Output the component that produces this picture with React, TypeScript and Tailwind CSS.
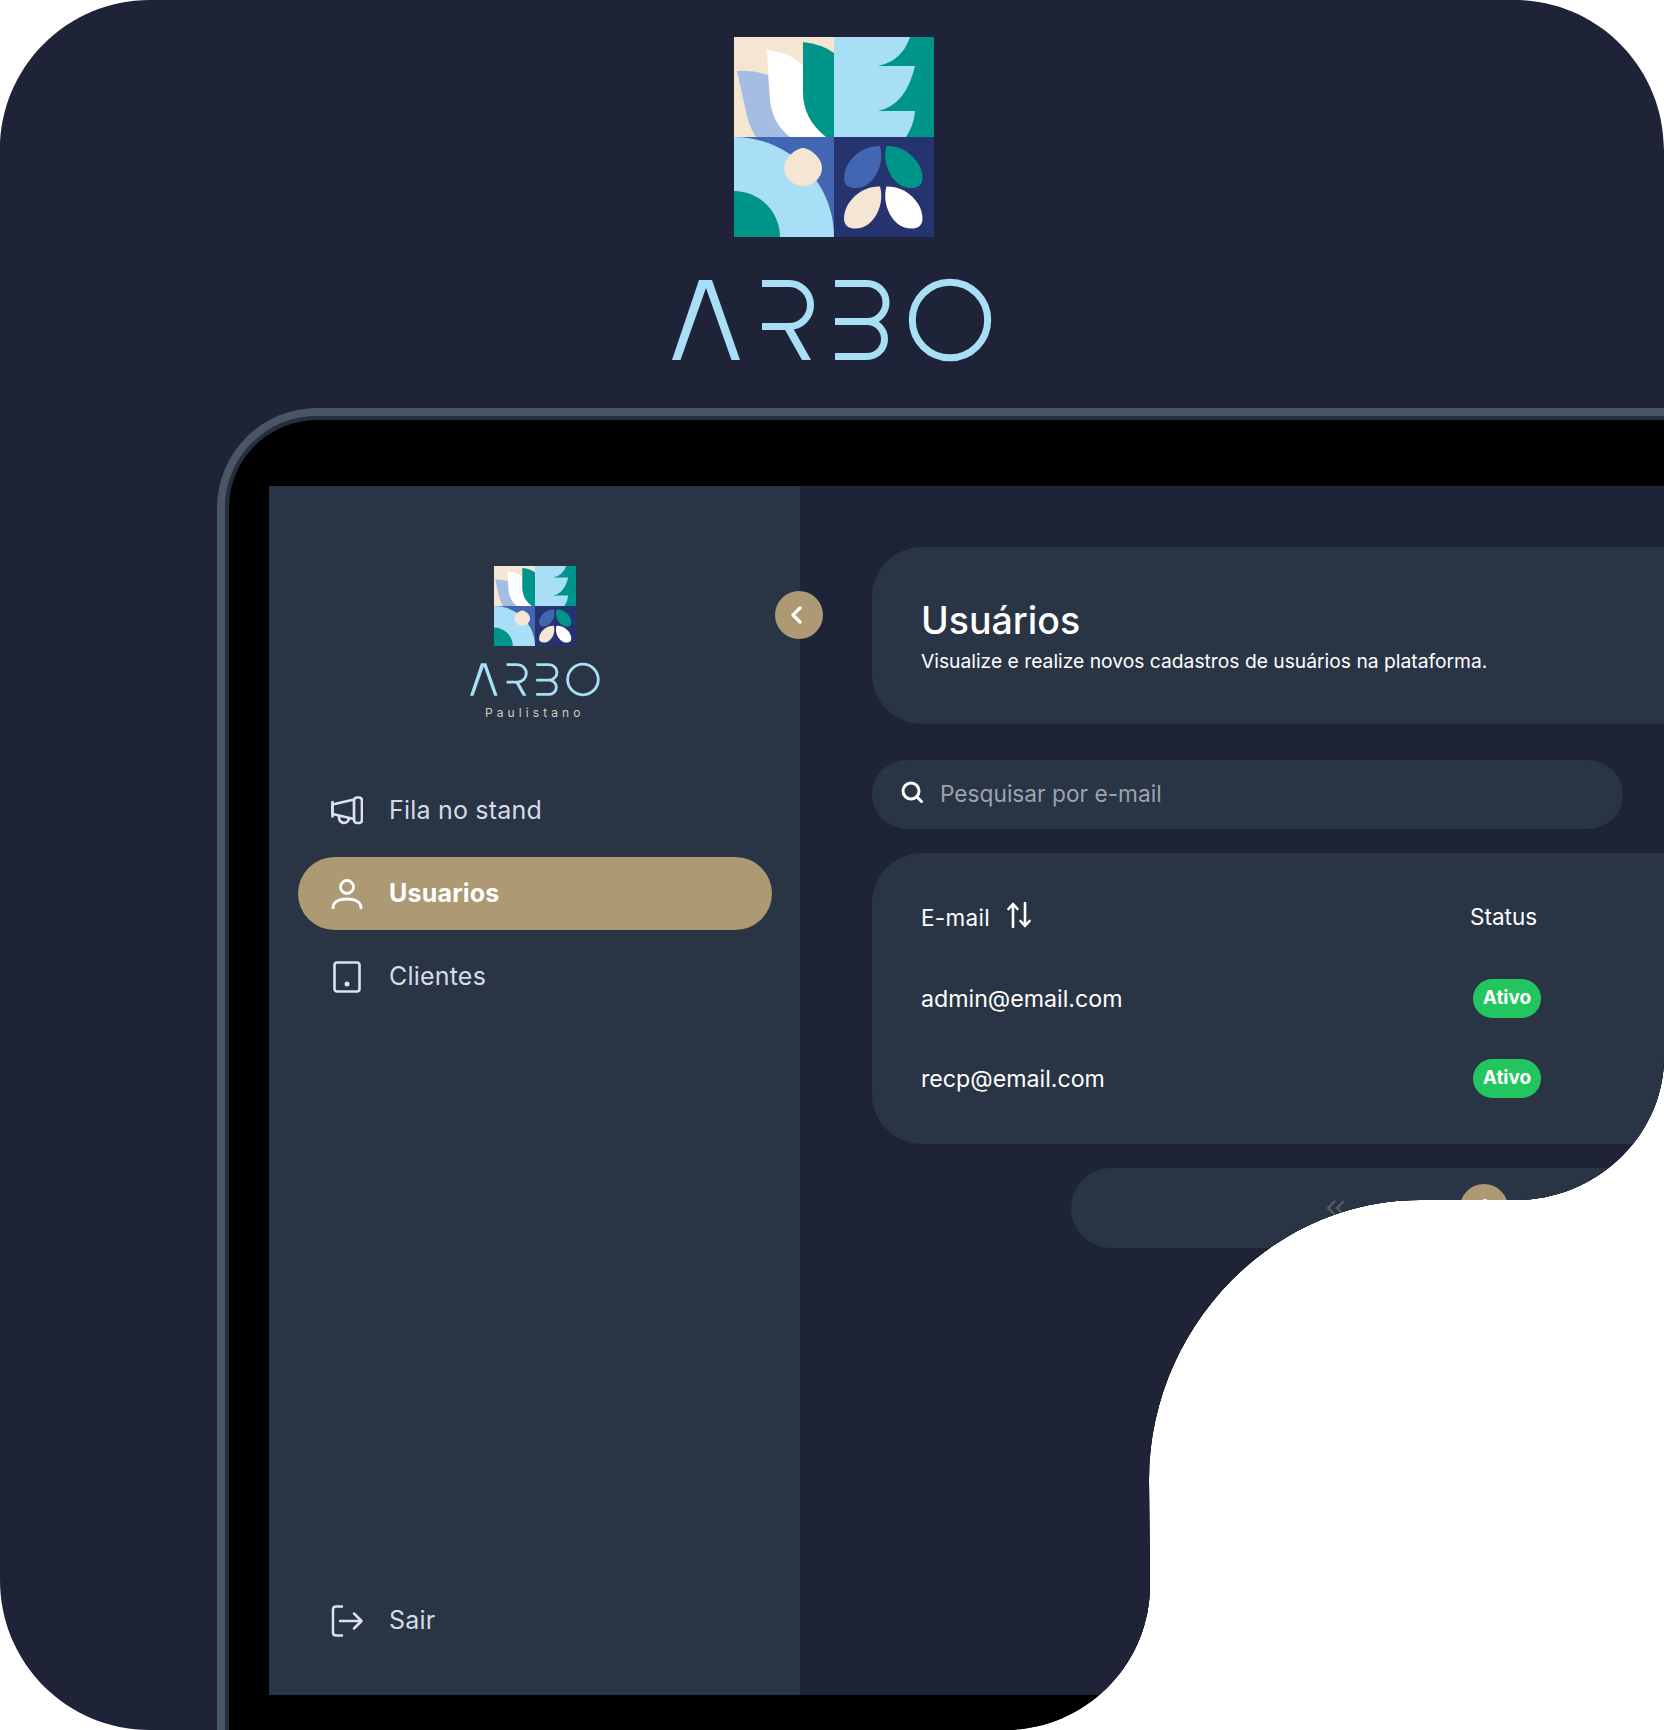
import React from "react";

function LogoMark({ className }: { className: string }) {
  const leaf =
    "M146,109 C128,108 110,124 110,141 C110,152 121,152 128,150 C141,146 151,126 146,109 Z";
  return (
    <svg viewBox="0 0 200 200" preserveAspectRatio="none" className={className}>
      <rect x="0" y="0" width="100" height="100" fill="#f5e6d3" />
      <rect x="100" y="0" width="100" height="100" fill="#a8dff7" />
      <rect x="0" y="100" width="100" height="100" fill="#4266b2" />
      <rect x="100" y="100" width="100" height="100" fill="#25336e" />
      <path d="M3,34 Q20,33 34,38 L36,62 Q38,86 56,100 H22 Q14,88 11,70 Z" fill="#a3bde3" />
      <path d="M33,13 Q55,15 69,28 V55 Q69,82 92,100 H56 Q38,86 36,62 Z" fill="#ffffff" />
      <path d="M69,5 Q88,7 100,16 V100 H92 Q69,82 69,55 Z" fill="#00958a" />
      <path d="M176,0 H200 V100 H172 Q180,88 181,74 H144 Q172,68 181,29 H144 Q168,24 176,0 Z" fill="#00958a" />
      <path d="M0,100 C55,100 100,145 100,200 H0 Z" fill="#a8dff7" />
      <path d="M0,154 A46,46 0 0 1 46,200 H0 Z" fill="#00958a" />
      <path d="M69,111 C78,112 88,122 88,131 C88,141 79,149 69,149 C59,149 50,141 50,131 C50,122 60,112 69,111 Z" fill="#f5e6d3" />
      <path d={leaf} fill="#4266b2" />
      <path d={leaf} fill="#00958a" transform="matrix(-1 0 0 1 298.5 0)" />
      <path d={leaf} fill="#f5e6d3" transform="translate(0 40.5)" />
      <path d={leaf} fill="#ffffff" transform="matrix(-1 0 0 1 298.5 40.5)" />
    </svg>
  );
}

function ArboWord({ className }: { className: string }) {
  return (
    <svg viewBox="0 -2 320 84" className={className} fill="none" stroke="#a8dff7" strokeWidth="7">
      <polygon points="0,80 27,0 40,0 68,80 59.5,80 34,8 8.5,80" fill="#a8dff7" stroke="none" />
      <path d="M90,3.5 H117 A21.5,21.5 0 0 1 117,46.5 H90" />
      <polygon points="112,48 121,48 139,80 130,80" fill="#a8dff7" stroke="none" />
      <path d="M163,3.5 H195 A19,19 0 0 1 195,41.5 H163 M195,41.5 A17.5,17.5 0 0 1 195,76.5 H163" />
      <circle cx="278" cy="40" r="37.7" />
    </svg>
  );
}

function NavRow({ icon, label, active }: { icon: React.ReactNode; label: string; active?: boolean }) {
  return (
    <div
      className={
        active
          ? "flex h-[73px] items-center rounded-[37px] bg-[#ad9a75] text-white font-bold"
          : "flex h-[73px] items-center rounded-[37px] text-[#d5dbe8]"
      }
    >
      <div className="flex w-[91px] shrink-0 justify-center pl-[7px]">{icon}</div>
      <span className="text-[25px] leading-none tracking-[0.2px]">{label}</span>
    </div>
  );
}

function Badge() {
  return (
    <span className="ml-[3px] flex h-[39px] w-[68px] items-center justify-center rounded-[20px] bg-[#22c55e] text-[19px] font-bold text-white">
      Ativo
    </span>
  );
}

export default function App() {
  return (
    <div className="h-[1730px] w-[1664px] overflow-hidden bg-white [font-family:Inter,sans-serif]">
      <div className="flex h-[1730px] w-[1664px] flex-col items-center overflow-hidden bg-[#1e2338] pt-[37px] [clip-path:path('M150,0_H1514_C1597,0_1664,67_1664,150_V1057_C1664,1136_1596,1200_1516,1200_H1420_C1270,1200_1149,1330_1149,1480_L1150,1585_C1150,1665_1085,1730_1005,1730_H150_C67,1730_0,1663_0,1580_V150_C0,67_67,0_150,0_Z')]">
        <LogoMark className="ml-1 h-[200px] w-[200px] shrink-0" />
        <ArboWord className="mt-[41px] h-[84px] w-[320px] shrink-0" />

        <div className="mt-[46px] w-[1664px] shrink-0 pl-[217px]">
          <div className="w-[1500px] rounded-tl-[100px] border-l-[8px] border-t-[8px] border-[#4a5568]">
            <div className="rounded-tl-[92px] border-l-[4px] border-t-[4px] border-[#262f3f] bg-black pb-[300px] pl-[40px] pt-[66px]">
              <div className="flex h-[1209px] w-[1450px]">
                {/* Sidebar */}
                <aside className="relative flex w-[530.5px] shrink-0 flex-col bg-[#293445] pb-[38px] pl-[29px] pr-[28px] pt-[80px]">
                  <div className="flex flex-col items-center">
                    <LogoMark className="h-[80px] w-[82px]" />
                    <ArboWord className="mt-[16px] h-[35px] w-[130px]" />
                    <span className="mt-[10px] text-[12px] leading-none tracking-[4.1px] text-[#d5cdbd]">Paulistano</span>
                  </div>

                  <nav className="mt-[55px] flex flex-col gap-[10px]">
                    <NavRow
                      label="Fila no stand"
                      icon={
                        <svg viewBox="0 0 32 29" className="h-[29px] w-[32px]" fill="none" stroke="#dbe1ee" strokeWidth="2.7" strokeLinejoin="round" strokeLinecap="round">
                          <rect x="23" y="1.5" width="8" height="25.5" rx="3" />
                          <path d="M23,3.5 L1.5,8.5 V18 L23,23" />
                          <path d="M1.5,6 V20.5" />
                          <path d="M8,21 C8,28 17,29 18,22.5" />
                        </svg>
                      }
                    />
                    <NavRow
                      active
                      label="Usuarios"
                      icon={
                        <svg viewBox="0 0 32 30" className="h-[30px] w-[32px]" fill="none" stroke="#ffffff" strokeWidth="2.8" strokeLinecap="round">
                          <circle cx="16" cy="8" r="6.5" />
                          <path d="M2,29 C2,23 8,20 16,20 C24,20 30,23 30,29" />
                        </svg>
                      }
                    />
                    <NavRow
                      label="Clientes"
                      icon={
                        <svg viewBox="0 0 28 32" className="h-[32px] w-[28px]" fill="none" stroke="#dbe1ee" strokeWidth="2.6">
                          <rect x="1.5" y="1.5" width="25" height="29" rx="2.5" />
                          <circle cx="14" cy="23" r="2.5" fill="#dbe1ee" stroke="none" />
                        </svg>
                      }
                    />
                  </nav>

                  <div className="mt-auto">
                    <NavRow
                      label="Sair"
                      icon={
                        <svg viewBox="0 0 32 32" className="h-[32px] w-[32px]" fill="none" stroke="#dbe1ee" strokeWidth="2.5" strokeLinecap="round" strokeLinejoin="round">
                          <path d="M11,1.5 H5 Q2,1.5 2,4.5 V27.5 Q2,30.5 5,30.5 H11" />
                          <path d="M9,16 H30 M23,8.5 L30.5,16 L23,23.5" />
                        </svg>
                      }
                    />
                  </div>

                  <button className="absolute left-[506px] top-[105px] flex h-[48px] w-[48px] items-center justify-center rounded-full bg-[#ad9a75]">
                    <svg viewBox="0 0 12 18" className="mr-[6px] h-[18px] w-[12px]" fill="none" stroke="#ffffff" strokeWidth="3.2" strokeLinecap="round" strokeLinejoin="round">
                      <path d="M10,2 L3,9 L10,16" />
                    </svg>
                  </button>
                </aside>

                {/* Main */}
                <main className="flex-1 bg-[#1e2338] pl-[72.5px] pt-[61px]">
                  <div className="flex h-[177px] w-[1000px] flex-col justify-center rounded-[50px] bg-[#293445] pl-[49px] text-white">
                    <h1 className="mt-[2px] text-[37.5px] font-medium leading-[44px]">Usuários</h1>
                    <p className="mt-[5px] text-[19.25px] leading-[26px]">
                      Visualize e realize novos cadastros de usuários na plataforma.
                    </p>
                  </div>

                  <div className="mt-[36px] flex h-[69px] w-[751px] items-center rounded-[35px] bg-[#293445] pl-[29px]">
                    <svg viewBox="0 0 22 22" className="mt-[-6px] h-[22px] w-[22px]" fill="none" stroke="#ffffff" strokeWidth="3" strokeLinecap="round">
                      <circle cx="10" cy="10" r="8" />
                      <path d="M16,16 L20.5,20.5" />
                    </svg>
                    <span className="ml-[17px] text-[22.7px] text-[#9ca3af]">Pesquisar por e-mail</span>
                  </div>

                  <div className="mt-[24px] h-[291px] w-[1000px] rounded-[50px] bg-[#293445] pl-[49px] pt-[25px] text-white">
                    <div className="flex h-[80px] items-center text-[22.5px]">
                      <div className="flex w-[549px] items-center">
                        <span className="mt-[-1px] tracking-[0.3px]">E-mail</span>
                        <svg viewBox="0 0 24 26" className="ml-[17px] mt-[-6px] h-[26px] w-[24px]" fill="none" stroke="#ffffff" strokeWidth="2.6" strokeLinecap="round" strokeLinejoin="round">
                          <path d="M6,25 V2 M1.5,7 L6,2 L10.5,7" />
                          <path d="M18,1 V24 M13.5,19 L18,24 L22.5,19" />
                        </svg>
                      </div>
                      <span className="mt-[-2px]">Status</span>
                    </div>
                    <div className="flex h-[80px] items-center text-[23.2px]">
                      <span className="mt-[2px] w-[549px]">admin@email.com</span>
                      <Badge />
                    </div>
                    <div className="flex h-[80px] items-center text-[23.2px]">
                      <span className="mt-[2px] w-[549px]">recp@email.com</span>
                      <Badge />
                    </div>
                  </div>

                  <div className="ml-[199px] mt-[24px] flex h-[80px] w-[800px] items-center rounded-[40px] bg-[#293445] pl-[255px]">
                    <svg viewBox="0 0 20 16" className="h-[16px] w-[20px]" fill="none" stroke="#56606f" strokeWidth="2">
                      <path d="M9,1 L2,8 L9,15 M18,1 L11,8 L18,15" />
                    </svg>
                    <span className="ml-[114px] flex h-[48px] w-[48px] items-center justify-center rounded-full bg-[#ad9a75] text-[22px] leading-none text-white">
                      <span className="mt-[-3px]">1</span>
                    </span>
                  </div>
                </main>
              </div>
            </div>
          </div>
        </div>
      </div>
    </div>
  );
}
